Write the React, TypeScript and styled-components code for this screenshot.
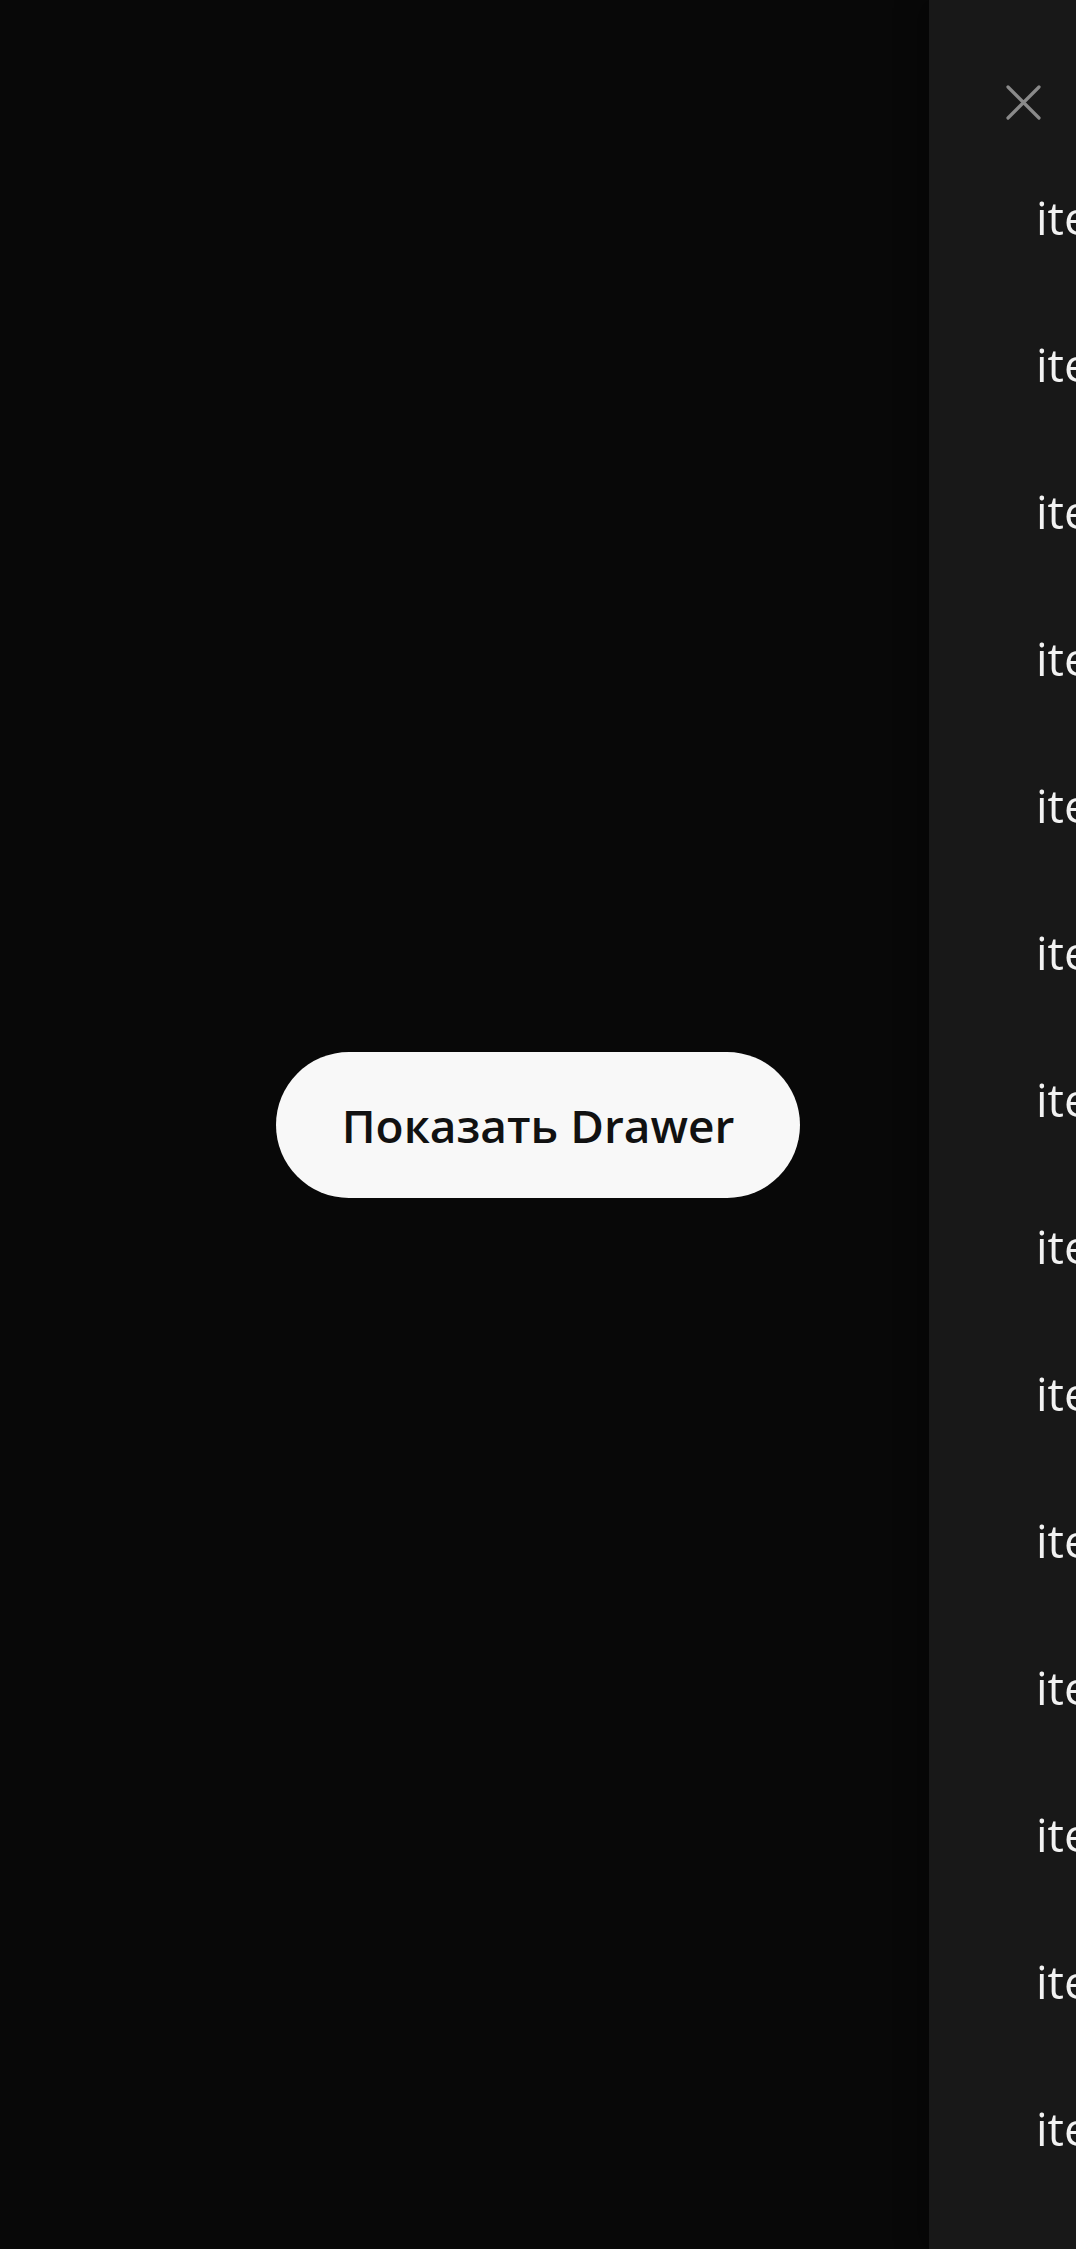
import React from "react";
import styled, { createGlobalStyle } from "styled-components";

const Global = createGlobalStyle`
  html, body {
    margin: 0;
    padding: 0;
    background: #080808;
    overflow: hidden;
    font-family: "Open Sans", "Noto Sans", sans-serif;
  }
`;

const Page = styled.main`
  width: 100vw;
  height: 100vh;
  display: flex;
  align-items: center;
  justify-content: center;
  background: #080808;
`;

const ShowButton = styled.button`
  height: 146px;
  padding: 0 66px;
  border: none;
  border-radius: 73px;
  background: #f8f8f8;
  color: #111111;
  font-family: "Open Sans", "Noto Sans", sans-serif;
  font-weight: 600;
  font-size: 46px;
  cursor: pointer;
`;

const Drawer = styled.aside`
  position: fixed;
  top: 0;
  bottom: 0;
  left: 929px;
  width: 420px;
  background: #181818;
  box-shadow: -8px 0 24px rgba(0, 0, 0, 0.35);
  display: flex;
  flex-direction: column;
  overflow: hidden;
`;

const Header = styled.div`
  height: 143px;
  flex-shrink: 0;
  display: flex;
  align-items: flex-start;
  padding: 85px 0 0 77px;
  box-sizing: border-box;
`;

const CloseButton = styled.button`
  width: 35px;
  height: 35px;
  padding: 0;
  border: none;
  background: transparent;
  display: flex;
  cursor: pointer;
`;

const List = styled.ul`
  list-style: none;
  margin: 0;
  padding: 0 0 0 107px;
`;

const Item = styled.li`
  height: 147px;
  flex-shrink: 0;
  display: flex;
  align-items: center;
  color: #f2f2f2;
  font-size: 46px;
  font-weight: 400;
  white-space: nowrap;
`;

const items = Array.from({ length: 20 }, (_, i) => `item ${i + 1}`);

export default function App() {
  return (
    <>
      <Global />
      <Page>
        <ShowButton>Показать Drawer</ShowButton>
      </Page>
      <Drawer>
        <Header>
          <CloseButton aria-label="close">
            <svg width="35" height="35" viewBox="0 0 35 35" fill="none">
              <path
                d="M2 2 L33 33 M33 2 L2 33"
                stroke="#8a8a8a"
                strokeWidth="3.2"
                strokeLinecap="round"
              />
            </svg>
          </CloseButton>
        </Header>
        <List>
          {items.map((t) => (
            <Item key={t}>{t}</Item>
          ))}
        </List>
      </Drawer>
    </>
  );
}
